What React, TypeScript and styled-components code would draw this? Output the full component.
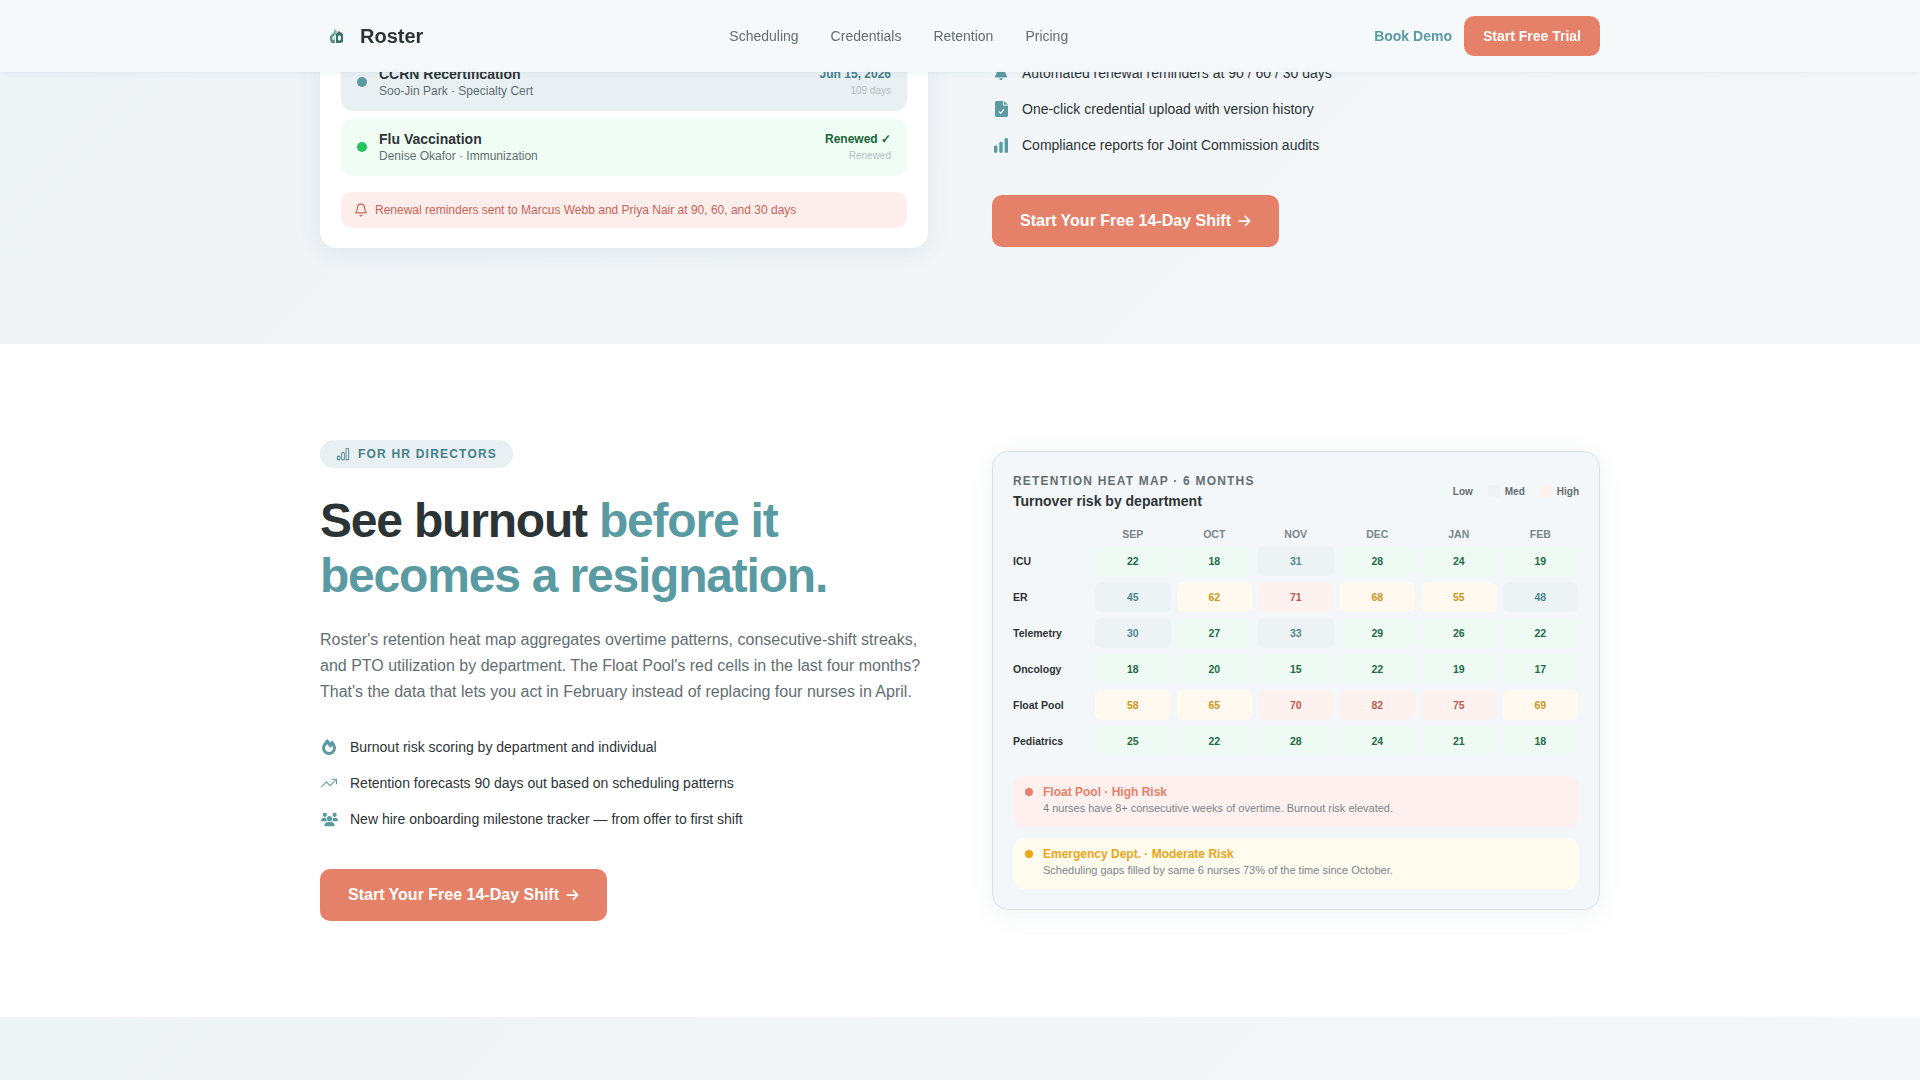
import React from "react";
import styled, { createGlobalStyle } from "styled-components";
import { FaBell, FaUsers, FaArrowRight } from "react-icons/fa6";
import { FaFireAlt } from "react-icons/fa";
import { BsBarChart } from "react-icons/bs";
import { Bell, TrendingUp } from "lucide-react";

const Global = createGlobalStyle`
  html, body { margin: 0; padding: 0; background: #fff; overflow: hidden; }
  * { box-sizing: border-box; }
  body { font-family: "Liberation Sans", Arial, sans-serif; color: #2d3436; }
`;

const C = { teal: "#5a9aa3", coral: "#e58168", ink: "#2d3436", gray: "#636e72" };

const Nav = styled.nav`
  position: fixed; top: 0; left: 0; right: 0; height: 72px; z-index: 5;
  background: rgba(246, 249, 250, 0.98);
  box-shadow: 0 1px 6px rgba(60, 90, 100, 0.08);
  display: flex; justify-content: center;
`;
const NavInner = styled.div`
  width: 1280px; display: flex; align-items: center; justify-content: space-between;
`;
const Logo = styled.div`
  display: flex; align-items: center; gap: 16px; margin-left: 9px;
  font-size: 20px; font-weight: 700; color: ${C.ink};
`;
const NavLinks = styled.div`display: flex; gap: 32px;`;
const NavLink = styled.a`font-size: 14px; color: ${C.gray};`;
const NavRight = styled.div`display: flex; align-items: center; gap: 12px;`;
const Demo = styled.a`font-size: 14px; font-weight: 700; color: ${C.teal};`;
const TrialBtn = styled.button`
  height: 40px; padding: 0 19px; border: 0; border-radius: 10px; background: ${C.coral};
  color: #fff; font: 700 14px "Liberation Sans", Arial, sans-serif;
`;

const TopSection = styled.section`
  height: 344px; overflow: hidden; background: linear-gradient(135deg, #eef3f6 0%, #f5f8fa 100%);
  display: flex; justify-content: center; align-items: flex-end; padding-bottom: 96px;
`;
const MidSection = styled.section`
  height: 673px; background: #fff; display: flex; justify-content: center; align-items: center;
`;
const BottomSection = styled.section`
  height: 63px; background: linear-gradient(135deg, #eef3f6 0%, #f5f8fa 100%);
`;
const Columns = styled.div<{ $end?: boolean }>`
  width: 1280px; display: grid; grid-template-columns: 608px 608px; column-gap: 64px;
  align-items: ${(p) => (p.$end ? "end" : "center")};
`;
const PitchColumn = styled.div<{ $lift?: number }>`
  padding-bottom: ${(p) => p.$lift ?? 0}px;
`;

const Card = styled.div`
  background: #fff; border-radius: 16px; padding: 20px;
  box-shadow: 0 4px 24px rgba(60, 90, 100, 0.09);
`;
const RenewRow = styled.div<{ $bg: string }>`
  height: 57px; margin: 0 1px 8px; padding: 0 16px 1px; border-radius: 12px; background: ${(p) => p.$bg};
  display: flex; align-items: center; gap: 12px;
  &:last-of-type { margin-bottom: 0; }
`;
const Dot = styled.span<{ $c: string; $size?: number }>`
  flex: none; width: ${(p) => p.$size ?? 10}px; height: ${(p) => p.$size ?? 10}px;
  border-radius: 50%; background: ${(p) => p.$c};
`;
const RowText = styled.div`flex: 1;`;
const RowTitle = styled.div`font-size: 14px; font-weight: 700; line-height: 17px; color: ${C.ink};`;
const RowSub = styled.div`font-size: 12px; line-height: 16px; color: ${C.gray};`;
const RowEnd = styled.div`text-align: right;`;
const RowDate = styled.div<{ $c: string }>`font-size: 12px; font-weight: 700; line-height: 15px; color: ${(p) => p.$c};`;
const RowDays = styled.div`font-size: 10px; line-height: 13px; margin-top: 2px; color: #b2bec3;`;
const ReminderBar = styled.div`
  height: 36px; margin: 16px 1px 0; padding: 0 13px; border-radius: 10px; background: #fdeeeb;
  display: flex; align-items: center; gap: 7px; font-size: 12px; color: #c9635a;
  svg { flex: none; }
`;

const BulletList = styled.ul`list-style: none; margin: 0; padding: 0;`;
const Bullet = styled.li`
  height: 36px; display: flex; align-items: center; gap: 12px; font-size: 14px; color: ${C.ink};
`;
const BulletIcon = styled.span`
  width: 18px; flex: none; display: flex; justify-content: center; align-items: center; color: ${C.teal};
`;
const Cta = styled.button`
  height: 52px; width: 287px; margin-top: 32px; padding: 0 28px; border: 0; border-radius: 10px; background: ${C.coral};
  color: #fff; font: 700 16px "Liberation Sans", Arial, sans-serif;
  display: flex; align-items: center; gap: 7px; white-space: nowrap;
`;

const Badge = styled.div`
  display: inline-flex; align-items: center; gap: 8px; height: 28px; padding: 0 16px;
  border-radius: 14px; background: #e8f0f3; color: #45808a;
  font-size: 12px; font-weight: 700; letter-spacing: 1.2px;
`;
const Heading = styled.h2`
  margin: 25px 0 0; font-size: 48px; line-height: 55px; font-weight: 700; letter-spacing: -1.2px; color: ${C.ink};
  span { color: ${C.teal}; }
`;
const Lead = styled.p`
  margin: 24px 0 24px; font-size: 16px; line-height: 26px; color: ${C.gray};
`;

const HeatCard = styled.div`
  background: #f4f7f9; border: 1px solid #dbe2e6; border-radius: 16px; padding: 20px;
  box-shadow: 0 4px 24px rgba(60, 90, 100, 0.08);
`;
const HeatHead = styled.div`display: flex; justify-content: space-between; align-items: center;`;
const Eyebrow = styled.div`
  font-size: 12px; line-height: 18px; font-weight: 700; letter-spacing: 1.2px; color: ${C.gray};
`;
const HeatTitle = styled.div`font-size: 14px; line-height: 20px; font-weight: 700; margin-top: 1px; color: ${C.ink};`;
const Legend = styled.div`display: flex; gap: 15px; margin-bottom: 1px;`;
const LegendItem = styled.div`
  display: flex; align-items: center; gap: 5px; font-size: 10px; font-weight: 700; color: ${C.gray};
`;
const Swatch = styled.span<{ $c: string }>`
  width: 12px; height: 12px; border-radius: 3px; background: ${(p) => p.$c};
`;
const HeatGrid = styled.div`
  margin: 17px 1px 0 0; display: grid; grid-template-columns: 76px repeat(6, 1fr);
  grid-auto-rows: 30px; grid-template-rows: 12px; gap: 6px;
`;
const Month = styled.div`
  font-size: 10.5px; font-weight: 700; line-height: 12px; text-align: center; color: #7a868a;
`;
const RowLabel = styled.div`
  font-size: 10.5px; font-weight: 700; display: flex; align-items: center; color: ${C.ink};
`;
const tone: Record<string, [string, string]> = {
  g: ["#eefaf3", "#1e6b45"],
  b: ["#edf3f5", "#4f8791"],
  y: ["#fff9f0", "#cf9620"],
  r: ["#fef2f0", "#c05a52"],
};
const Cell = styled.div<{ $t: string }>`
  border-radius: 6px; background: ${(p) => tone[p.$t][0]}; color: ${(p) => tone[p.$t][1]};
  font-size: 10.5px; font-weight: 700; display: flex; align-items: center; justify-content: center;
`;
const Callouts = styled.div`margin-top: 20px; display: flex; flex-direction: column; gap: 11px;`;
const Callout = styled.div<{ $bg: string }>`
  height: 51px; padding: 8px 12px; border-radius: 10px; background: ${(p) => p.$bg};
  display: flex; gap: 10px; align-items: flex-start;
`;
const CalloutDot = styled(Dot)`margin-top: 4px;`;
const CalloutTitle = styled.div<{ $c: string }>`font-size: 12px; line-height: 16px; font-weight: 700; color: ${(p) => p.$c};`;
const CalloutSub = styled.div`font-size: 11px; line-height: 15px; margin-top: 1px; color: #7a868a;`;

const rows: [string, [number, string][]][] = [
  ["ICU", [[22,"g"],[18,"g"],[31,"b"],[28,"g"],[24,"g"],[19,"g"]]],
  ["ER", [[45,"b"],[62,"y"],[71,"r"],[68,"y"],[55,"y"],[48,"b"]]],
  ["Telemetry", [[30,"b"],[27,"g"],[33,"b"],[29,"g"],[26,"g"],[22,"g"]]],
  ["Oncology", [[18,"g"],[20,"g"],[15,"g"],[22,"g"],[19,"g"],[17,"g"]]],
  ["Float Pool", [[58,"y"],[65,"y"],[70,"r"],[82,"r"],[75,"r"],[69,"y"]]],
  ["Pediatrics", [[25,"g"],[22,"g"],[28,"g"],[24,"g"],[21,"g"],[18,"g"]]],
];
const months = ["SEP", "OCT", "NOV", "DEC", "JAN", "FEB"];

const LogoMark = () => (
  <svg width="15" height="16" viewBox="0 0 15 16" aria-hidden="true">
    <path d="M2 7 L5 4 V1 L8 3 L7 7 Z" fill="#7fb3a8" />
    <path d="M1 8 L5 6 L6 15 H2.5 Q0.5 12 1 8 Z" fill="#4f8f8a" />
    <path d="M7 6 L10 3 L14 6 V14 L11 15 H7 Z" fill="#3f6f6c" />
    <rect x="9" y="7.5" width="2.8" height="5" rx="1.2" fill="#f4f8f9" />
    <rect x="3.4" y="8" width="1.6" height="4" rx="0.8" fill="#f4f8f9" />
  </svg>
);

const DocCheckIcon = () => (
  <svg width="13" height="16" viewBox="0 0 13 16" aria-hidden="true">
    <path d="M1.5 0H8V4.5H13V14.5A1.5 1.5 0 0 1 11.5 16H1.5A1.5 1.5 0 0 1 0 14.5V1.5A1.5 1.5 0 0 1 1.5 0Z" fill="currentColor" />
    <path d="M9 0L13 3.6H9Z" fill="currentColor" />
    <path d="M4 10.5L5.8 12.3L9 8.2" fill="none" stroke="#f2f6f8" strokeWidth="1.3" />
  </svg>
);

const BarsIcon = () => (
  <svg width="14" height="15" viewBox="0 0 14 15" aria-hidden="true">
    <rect x="0" y="7.5" width="3.4" height="7.5" rx="1.4" fill="currentColor" />
    <rect x="5.3" y="3.8" width="3.4" height="11.2" rx="1.4" fill="currentColor" />
    <rect x="10.6" y="0" width="3.4" height="15" rx="1.4" fill="currentColor" />
  </svg>
);

export default function App() {
  return (
    <>
      <Global />
      <Nav>
        <NavInner>
          <Logo><LogoMark />Roster</Logo>
          <NavLinks>
            <NavLink>Scheduling</NavLink>
            <NavLink>Credentials</NavLink>
            <NavLink>Retention</NavLink>
            <NavLink>Pricing</NavLink>
          </NavLinks>
          <NavRight>
            <Demo>Book Demo</Demo>
            <TrialBtn>Start Free Trial</TrialBtn>
          </NavRight>
        </NavInner>
      </Nav>

      <TopSection>
        <Columns $end>
          <Card>
            <RenewRow $bg="#e8f0f3">
              <Dot $c={C.teal} />
              <RowText>
                <RowTitle>CCRN Recertification</RowTitle>
                <RowSub>Soo-Jin Park · Specialty Cert</RowSub>
              </RowText>
              <RowEnd>
                <RowDate $c="#45808a">Jun 15, 2026</RowDate>
                <RowDays>109 days</RowDays>
              </RowEnd>
            </RenewRow>
            <RenewRow $bg="#f0fdf4">
              <Dot $c="#22c55e" />
              <RowText>
                <RowTitle>Flu Vaccination</RowTitle>
                <RowSub>Denise Okafor · Immunization</RowSub>
              </RowText>
              <RowEnd>
                <RowDate $c="#166534">Renewed ✓</RowDate>
                <RowDays>Renewed</RowDays>
              </RowEnd>
            </RenewRow>
            <ReminderBar>
              <Bell size={14} />
              Renewal reminders sent to Marcus Webb and Priya Nair at 90, 60, and 30 days
            </ReminderBar>
          </Card>
          <PitchColumn $lift={1}>
            <BulletList>
              <Bullet><BulletIcon><FaBell size={14} /></BulletIcon>Automated renewal reminders at 90 / 60 / 30 days</Bullet>
              <Bullet><BulletIcon><DocCheckIcon /></BulletIcon>One-click credential upload with version history</Bullet>
              <Bullet><BulletIcon><BarsIcon /></BulletIcon>Compliance reports for Joint Commission audits</Bullet>
            </BulletList>
            <Cta>Start Your Free 14-Day Shift <FaArrowRight size={14} /></Cta>
          </PitchColumn>
        </Columns>
      </TopSection>

      <MidSection>
        <Columns>
          <PitchColumn>
            <Badge><BsBarChart size={14} />FOR HR DIRECTORS</Badge>
            <Heading>See burnout <span>before it becomes a resignation.</span></Heading>
            <Lead>
              Roster's retention heat map aggregates overtime patterns, consecutive-shift streaks, and PTO utilization by department. The Float Pool's red cells in the last four months? That's the data that lets you act in February instead of replacing four nurses in April.
            </Lead>
            <BulletList>
              <Bullet><BulletIcon><FaFireAlt size={16} /></BulletIcon>Burnout risk scoring by department and individual</Bullet>
              <Bullet><BulletIcon><TrendingUp size={18} strokeWidth={1.4} /></BulletIcon>Retention forecasts 90 days out based on scheduling patterns</Bullet>
              <Bullet><BulletIcon><FaUsers size={17} /></BulletIcon>New hire onboarding milestone tracker — from offer to first shift</Bullet>
            </BulletList>
            <Cta>Start Your Free 14-Day Shift <FaArrowRight size={14} /></Cta>
          </PitchColumn>
          <HeatCard>
            <HeatHead>
              <div>
                <Eyebrow>RETENTION HEAT MAP · 6 MONTHS</Eyebrow>
                <HeatTitle>Turnover risk by department</HeatTitle>
              </div>
              <Legend>
                <LegendItem><Swatch $c="#f0faf4" />Low</LegendItem>
                <LegendItem><Swatch $c="#edf3f5" />Med</LegendItem>
                <LegendItem><Swatch $c="#fef2f0" />High</LegendItem>
              </Legend>
            </HeatHead>
            <HeatGrid>
              <div />
              {months.map((m) => <Month key={m}>{m}</Month>)}
              {rows.map(([name, cells]) => (
                <React.Fragment key={name}>
                  <RowLabel>{name}</RowLabel>
                  {cells.map(([v, t], i) => <Cell key={i} $t={t}>{v}</Cell>)}
                </React.Fragment>
              ))}
            </HeatGrid>
            <Callouts>
              <Callout $bg="#fdf0ee">
                <CalloutDot $c={C.coral} $size={8} />
                <div>
                  <CalloutTitle $c={C.coral}>Float Pool · High Risk</CalloutTitle>
                  <CalloutSub>4 nurses have 8+ consecutive weeks of overtime. Burnout risk elevated.</CalloutSub>
                </div>
              </Callout>
              <Callout $bg="#fffbef">
                <CalloutDot $c="#f0a80c" $size={8} />
                <div>
                  <CalloutTitle $c="#eaa61c">Emergency Dept. · Moderate Risk</CalloutTitle>
                  <CalloutSub>Scheduling gaps filled by same 6 nurses 73% of the time since October.</CalloutSub>
                </div>
              </Callout>
            </Callouts>
          </HeatCard>
        </Columns>
      </MidSection>

      <BottomSection />
    </>
  );
}
